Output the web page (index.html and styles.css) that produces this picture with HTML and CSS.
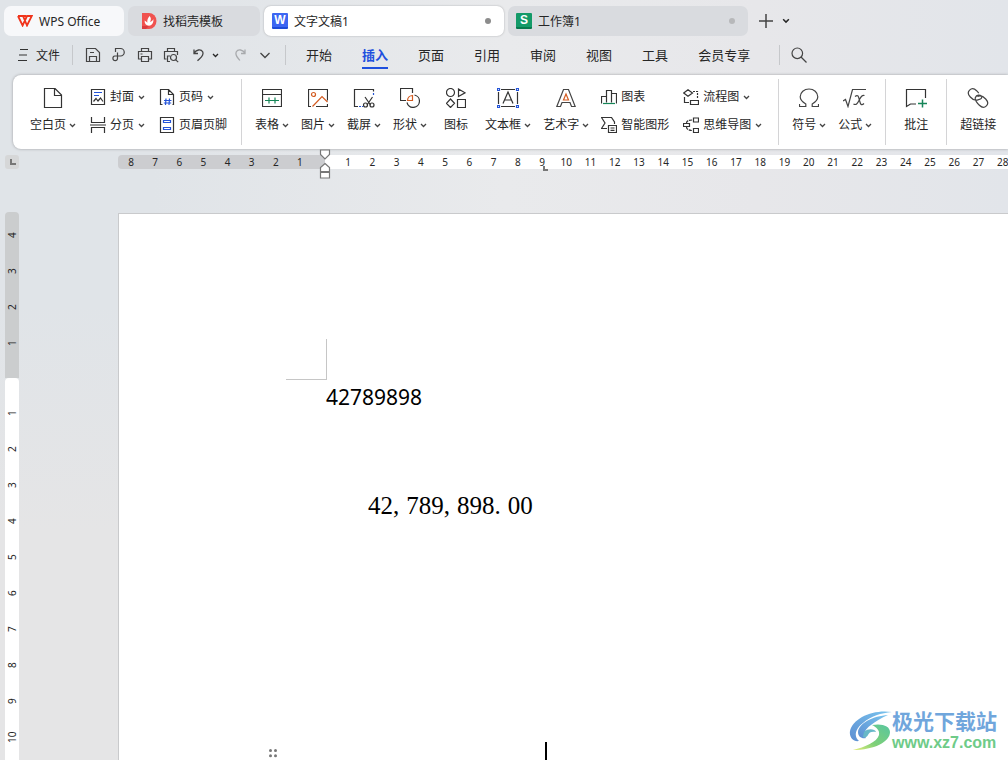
FILE: index.html
```html
<!DOCTYPE html>
<html lang="zh-CN">
<head>
<meta charset="utf-8">
<title>文字文稿1 - WPS Office</title>
<link rel="stylesheet" href="styles.css">
</head>
<body>
<svg class="defs" aria-hidden="true">
  <symbol id="chev" viewBox="0 0 7 5"><path d="M1 1l2.5 2.5L6 1" fill="none" stroke="currentColor" stroke-width="1.3"/></symbol>
</svg>
<div class="app">
  <header class="tabs">
    <button class="tab tab-home"><svg width="16" height="12" viewBox="0 0 16 12" fill="none" stroke="#f0341c" stroke-width="1.8"><path d="M1 1h5l4 9.5L14.8 1H10L5.6 10.5 1 1M6 1h3"/></svg><span>WPS Office</span></button>
    <button class="tab tab-docer"><svg width="16" height="16" viewBox="0 0 16 16"><path fill="#f0524f" d="M1 0h7a7.5 8 0 0 1 0 16H1z"/><path fill="#d93c40" d="M1 13h7l-3 3H1z"/><path fill="#fff" d="M8.6 3c1.7 2 1.6 4 .3 6C12 8 12 6.500 12.300 6c.6 4-1.500 6.500-4.300 6.700C5 12.500 3.400 10.500 3.600 7.500c1 .6 2 1.200 2.700 2.300C6 7 7 5 8.600 3z"/></svg><span>找稻壳模板</span></button>
    <button class="tab tab-doc active"><span class="app-icon writer">W</span><span class="name">文字文稿1</span><i class="dot"></i></button>
    <button class="tab tab-doc"><span class="app-icon sheet">S</span><span class="name">工作簿1</span><i class="dot"></i></button>
    <button class="plain new-tab" aria-label="新建"><svg width="14" height="14" viewBox="0 0 14 14" stroke="#444" stroke-width="1.500"><path d="M7 0v14M0 7h14"/></svg></button>
    <button class="plain" aria-label="标签列表"><svg width="8" height="6" viewBox="0 0 7 5"><use href="#chev"/></svg></button>
  </header>

  <nav class="menubar">
    <button class="plain file"><svg width="10" height="12" viewBox="0 0 10 12" stroke="#333"><path d="M2 .5h8M1 6h8M0 11.500h9"/></svg><span>文件</span></button>
    <i class="bar"></i>
    <div class="quick">
      <button class="plain" aria-label="保存"><svg width="16" height="16" viewBox="0 0 16 16" fill="none" stroke="#444" stroke-width="1.200"><path d="M1.500 1.500h9l4 4v9h-13zM4.500 14.500V9.500h7v5M5 5.500h4"/></svg></button>
      <button class="plain" aria-label="输出为PDF"><svg width="16" height="16" viewBox="0 0 16 16" fill="none" stroke="#444" stroke-width="1.200"><path d="M4.500 5V1.500h5a3.600 3.600 0 0 1 0 7.500H3.800a2.300 2.300 0 1 0 2.700 2.500V5.500"/></svg></button>
      <button class="plain" aria-label="打印"><svg width="16" height="16" viewBox="0 0 16 16" fill="none" stroke="#444" stroke-width="1.200"><path d="M4.500 4.500v-3h7v3M4 12H1.500V4.500h13V12H12M4.500 9.500h7v5h-7zM3.500 7h2"/></svg></button>
      <button class="plain" aria-label="打印预览"><svg width="16" height="16" viewBox="0 0 16 16" fill="none" stroke="#444" stroke-width="1.200"><path d="M4.500 4.500v-3h7v3M3.500 12h-2V4.500h13V8M7 9H4.500v5.500H7"/><circle cx="10.500" cy="10.500" r="3"/><path d="M12.800 12.800l2.400 2.400"/></svg></button>
      <button class="plain undo" aria-label="撤销"><svg width="14" height="14" viewBox="0 0 14 14" fill="none" stroke="#444" stroke-width="1.300"><path d="M2 1.500v4h4M2 5.200C4 1.500 9 .8 10.700 3.800c1.800 4-2.500 6.200-5.200 9"/></svg></button>
      <button class="plain undo-list" aria-label="撤销列表"><svg width="7" height="5"><use href="#chev"/></svg></button>
      <button class="plain redo" aria-label="恢复"><svg width="14" height="14" viewBox="0 0 14 14" fill="none" stroke="#a8aaad" stroke-width="1.300"><path d="M12 1.500v4H8M12 5.200C10 1.500 5 .8 3.300 3.800c-1.800 4 2 6.200 3.500 8.700"/></svg></button>
      <button class="plain more" aria-label="更多"><svg width="12" height="7" viewBox="0 0 12 7" fill="none" stroke="#444" stroke-width="1.300"><path d="M1.500 1L6 5.500 10.500 1"/></svg></button>
    </div>
    <i class="bar"></i>
    <div class="menus">
      <button class="plain">开始</button>
      <button class="plain current">插入</button>
      <button class="plain">页面</button>
      <button class="plain">引用</button>
      <button class="plain">审阅</button>
      <button class="plain">视图</button>
      <button class="plain">工具</button>
      <button class="plain">会员专享</button>
    </div>
    <i class="bar"></i>
    <button class="plain search" aria-label="搜索"><svg width="16" height="16" viewBox="0 0 16 16" fill="none" stroke="#444" stroke-width="1.200"><circle cx="6.300" cy="6.300" r="5.300"/><path d="M10 10l5.500 5.500"/></svg></button>
  </nav>

  <section class="ribbon">
    <div class="group first">
      <button class="big"><svg width="20" height="20" viewBox="0 0 20 20" fill="none" stroke="#333" stroke-width="1.200"><path d="M1.500.5H12l6.500 6.500v12.500h-17zM11.500.5V7.500h7"/></svg><span>空白页<svg class="chev"><use href="#chev"/></svg></span></button>
      <div class="stack">
        <button class="small"><svg width="16" height="16" viewBox="0 0 16 16" fill="none" stroke="#333" stroke-width="1.200"><path d="M1.500.5h13v15h-13z"/><path stroke="#2454d8" d="M4 3.500h8M4 6.500h5"/><path d="M3.500 12.500l2.500-3 2 2.500 2.500-3 2.500 3.500"/></svg><span>封面</span><svg class="chev"><use href="#chev"/></svg></button>
        <button class="small"><svg width="16" height="16" viewBox="0 0 16 16" fill="none" stroke="#333" stroke-width="1.200"><path d="M1.500 0v5.500h13V0M0 8h16M1.500 16v-5.500h13V16"/></svg><span>分页</span><svg class="chev"><use href="#chev"/></svg></button>
      </div>
      <div class="stack">
        <button class="small"><svg width="16" height="16" viewBox="0 0 16 16" fill="none" stroke="#333" stroke-width="1.200"><path d="M3.500 15.500h-2V.5h8l5 5v10h-1M9.500.5v5h5"/><path stroke="#2454d8" d="M7 9.500L6.500 16M10.500 9.500L10 16M5 11.500h7.500M4.800 14h7.400"/></svg><span>页码</span><svg class="chev"><use href="#chev"/></svg></button>
        <button class="small"><svg width="16" height="16" viewBox="0 0 16 16" fill="none" stroke="#333" stroke-width="1.200"><path d="M1.500.5h13v15h-13z"/><path stroke="#2454d8" d="M4.500 3.500h7v2h-7zM4.500 10.500h7v2h-7z"/></svg><span>页眉页脚</span></button>
      </div>
    </div>

    <div class="group objects">
      <button class="big"><svg width="20" height="20" viewBox="0 0 20 20" fill="none" stroke="#333" stroke-width="1.200"><path d="M.5 1.500h19v17H.5zM.5 6.500h19"/><path stroke="#168558" d="M3 12.500h14M7 9.500v6M13 9.500v6"/></svg><span>表格<svg class="chev"><use href="#chev"/></svg></span></button>
      <button class="big"><svg width="20" height="20" viewBox="0 0 20 20" fill="none" stroke="#333" stroke-width="1.200"><path d="M3 18.500H.5v-17h19v11M19.500 16v2.500H8"/><g stroke="#d35b20"><circle cx="5.500" cy="6.500" r="2"/><path d="M4.500 18.500l9.500-10 5.500 5.500"/></g></svg><span>图片<svg class="chev"><use href="#chev"/></svg></span></button>
      <button class="big"><svg width="22" height="20" viewBox="0 0 22 20" fill="none" stroke="#333" stroke-width="1.200"><path d="M5 18.500H1.500v-17h19v2"/><path stroke="#2454d8" stroke-dasharray="2 1" d="M20.500 5v3M6 18.500h4"/><path d="M12 9l5.500 8M19.500 9L14 17"/><circle cx="12.500" cy="17" r="2"/><circle cx="19" cy="17" r="2"/></svg><span>截屏<svg class="chev"><use href="#chev"/></svg></span></button>
      <button class="big"><svg width="20" height="20" viewBox="0 0 20 20" fill="none" stroke="#333" stroke-width="1.200"><path d="M6 12.500H.5V.5h12V5M14.500 7A6.300 6.300 0 1 1 7 14.500"/><path stroke="#d35b20" d="M12.500 7.500v5h-5a5.300 5.300 0 0 1 5-5z"/></svg><span>形状<svg class="chev"><use href="#chev"/></svg></span></button>
      <button class="big mid"><svg width="20" height="20" viewBox="0 0 20 20" fill="none" stroke="#333" stroke-width="1.200"><circle cx="4.500" cy="4.500" r="4"/><path d="M12.500 1v7.500L19 4.800zM4.500 11l4 4.300-4 4.200-4-4.200zM11.500 11.500h8v8h-8z"/></svg><span>图标</span></button>
      <button class="big"><svg width="22" height="20" viewBox="0 0 22 20" fill="none" stroke="#333" stroke-width="1.200"><path d="M4 1.500h14M4 18.500h14M1.500 4v12M20.500 4v12M6 15.500l5-11.500 5 11.500M7.500 12h7"/><path stroke="#2454d8" d="M.5.5h2v2h-2zM19.500.5h2v2h-2zM.5 17.500h2v2h-2zM19.500 17.500h2v2h-2z"/></svg><span>文本框<svg class="chev"><use href="#chev"/></svg></span></button>
      <button class="big"><svg width="20" height="20" viewBox="0 0 20 20" fill="none" stroke="#444" stroke-width="1.200"><path d="M.8 18.500L7.500 1.500h5l6.700 17h-3.700l-1.500-4H6l-1.500 4z"/><path stroke="#d35b20" d="M10 6l-2.500 6h5z"/></svg><span>艺术字<svg class="chev"><use href="#chev"/></svg></span></button>
      <div class="stacks">
        <div class="stack">
          <button class="small"><svg width="16" height="16" viewBox="0 0 16 16" fill="none" stroke="#333" stroke-width="1.200"><path d="M.5 14.500v-7h5v6M5.500 7.500v-6h5v12M10.500 4.500h5v10"/><path stroke="#168558" d="M2 14.500h12"/></svg><span>图表</span></button>
          <button class="small"><svg width="16" height="16" viewBox="0 0 16 16" fill="none" stroke="#333" stroke-width="1.200"><path d="M6 11.500H.5L4 6 .5.500h10L13.500 5v2M7.500 8.500h8v7h-8zM9.500 11h4M9.500 13.300h4"/></svg><span>智能图形</span></button>
        </div>
        <div class="stack">
          <button class="small"><svg width="16" height="16" viewBox="0 0 16 16" fill="none" stroke="#333" stroke-width="1.200"><path d="M5 .8L9.500 4 5 7.200.7 4zM1.500 8v5.500H6M7.500 11.500h8v4h-8z"/><path stroke-dasharray="2 1" d="M10 2.500h4.500V10"/></svg><span>流程图</span><svg class="chev"><use href="#chev"/></svg></button>
          <button class="small"><svg width="16" height="16" viewBox="0 0 16 16" fill="none" stroke="#333" stroke-width="1.200"><path d="M.5 6.500h6v3h-6zM10.500 1h5v4h-5zM10.500 11.500h5v4h-5z"/><path stroke-dasharray="3 1" d="M3.500 6c0-2 2-3 6-3M3.500 10c0 2 2 3.500 6 3.500"/></svg><span>思维导图</span><svg class="chev"><use href="#chev"/></svg></button>
        </div>
      </div>
    </div>

    <div class="group">
      <button class="big"><svg width="20" height="20" viewBox="0 0 20 20" fill="none" stroke="#444" stroke-width="1.200"><path d="M.5 16v2.500h6.300V16C3 13.800 1.200 11.800 1.200 8.800a8.800 7.800 0 0 1 17.600 0c0 3-1.800 5-5.600 7.200v2.500h6.300V16"/></svg><span>符号<svg class="chev"><use href="#chev"/></svg></span></button>
      <button class="big"><svg width="24" height="20" viewBox="0 0 24 20" fill="none" stroke="#444" stroke-width="1.200"><path d="M0 13l2.500-1.500 2.500 7L9.500 1.500H23M12 8.500c3-2.500 3.500 0 4.500 4s2 5.500 4.500 3M21.500 7.500c-3-1-4 2-5.500 5s-3 5-5.500 3.500"/></svg><span>公式<svg class="chev"><use href="#chev"/></svg></span></button>
    </div>
    <div class="group note">
      <button class="big"><svg width="22" height="20" viewBox="0 0 22 20" fill="none" stroke="#333" stroke-width="1.200"><path d="M20.500 10V1.500h-19v17l4-2.500H11"/><path stroke="#168558" stroke-width="1.500" d="M17.500 11.500v8M13 15.500h9"/></svg><span>批注</span></button>
    </div>
    <div class="group">
      <button class="big"><svg width="22" height="20" viewBox="0 0 22 20" fill="none" stroke="#444" stroke-width="1.200"><path d="M11.500 11.600C8.500 13 5.500 11.500 3.300 9 1 6.500.6 4 2.600 2.100 4.600.2 7.300.5 9.600 2.700l2.200 2.400M10.500 8.400c3-1.400 6 .1 8.200 2.600 2.300 2.500 2.700 5 .7 6.900-2 1.900-4.700 1.600-7-.6-2.800-2.700-4.900-5.300-4-7.800.5-1.400 1.500-2.200 3-2.400 2-.2 3.500.7 3.300 2.400-.2 1.200-1.200 1.800-3.200 2.100"/></svg><span>超链接</span></button>
    </div>
  </section>

  <div class="ruler-row">
    <div class="corner"><svg width="14" height="14" viewBox="0 0 14 14" fill="none" stroke="#777" stroke-width="2"><path d="M6 4v5h5"/></svg></div>
    <div class="ruler">
      <div class="outside"><b>8</b><b>7</b><b>6</b><b>5</b><b>4</b><b>3</b><b>2</b><b>1</b>
        <svg class="indent" width="12" height="30" viewBox="0 0 12 30" fill="#fff" stroke="#777" stroke-width="1.200"><path d="M1.500 1h9v4.500L6 10 1.500 5.500zM6 14.500l4.500 4v4h-9v-4zM1.500 23.500h9V29h-9z"/></svg>
      </div>
      <div class="inside"><b>1</b><b>2</b><b>3</b><b>4</b><b>5</b><b>6</b><b>7</b><b>8</b><b>9</b><b>10</b><b>11</b><b>12</b><b>13</b><b>14</b><b>15</b><b>16</b><b>17</b><b>18</b><b>19</b><b>20</b><b>21</b><b>22</b><b>23</b><b>24</b><b>25</b><b>26</b><b>27</b><b>28</b><i class="tabstop"></i></div>
    </div>
  </div>

  <main class="workspace">
    <div class="vruler">
      <div class="above"><b>4</b><b>3</b><b>2</b><b>1</b></div>
      <div class="below"><b>1</b><b>2</b><b>3</b><b>4</b><b>5</b><b>6</b><b>7</b><b>8</b><b>9</b><b>10</b></div>
    </div>
    <article class="page">
      <div class="margin-mark"></div>
      <p class="plain-number">42789898</p>
      <p class="money">42<span>,</span>789<span>,</span>898<span>.</span>00</p>
      <div class="last-line">
        <svg width="10" height="14" viewBox="0 0 10 14" fill="#777"><circle cx="2.500" cy="4.500" r="1.500"/><circle cx="7.500" cy="4.500" r="1.500"/><circle cx="2.500" cy="9.700" r="1.500"/><circle cx="7.500" cy="9.700" r="1.500"/></svg>
        <i class="caret"></i>
      </div>
    </article>
  </main>

  <div class="watermark">
    <svg width="43" height="42" viewBox="0 0 43 42">
      <defs>
        <linearGradient id="wb" x1="0" y1="1" x2="1" y2="0"><stop offset="0" stop-color="#5d8fd2"/><stop offset="1" stop-color="#79c4ee"/></linearGradient>
        <linearGradient id="wg" x1="1" y1="0" x2="0" y2="1"><stop offset="0" stop-color="#58c6a0"/><stop offset=".6" stop-color="#7ed077"/><stop offset="1" stop-color="#e8ee7a"/></linearGradient>
      </defs>
      <path fill="url(#wb)" d="M43 2C24-1 4 8 1 21c-1 6 3 11 9 10-6-5-3-13 4-18C22 6 32 3 43 2z"/>
      <path fill="url(#wb)" d="M39 5C24 6 10 13 9 22c0 5 4 7 8 6-3-4-1-9 5-13 5-4 10-7 17-10z"/>
      <path fill="url(#wg)" d="M23 15c10-2 18 1 18 7 0 10-16 18-37 18 12-3 24-8 26-15 1-5-3-8-7-10z"/>
      <path fill="#68b8c8" d="M15 22c4-4 11-3 12 0-4-1-7 0-8 3-1 2-3 3-5 2z"/>
    </svg>
    <div class="wm-text"><strong>极光下载站</strong><span>www.xz7.com</span></div>
  </div>
</div>
</body>
</html>
```
FILE: styles.css
```css
* { box-sizing: border-box; }
body {
  margin: 0;
  font-family: "Noto Sans", "Noto Sans CJK SC", sans-serif;
  font-size: 12px;
  color: #262626;
}
svg { display: block; flex: none; }
button {
  margin: 0;
  padding: 0;
  border: 0;
  background: none;
  font: inherit;
  color: inherit;
  white-space: nowrap;
}
b { font-weight: 400; }
.defs { position: absolute; width: 0; height: 0; }
.app {
  position: relative;
  display: flex;
  flex-direction: column;
  height: 100vh;
  overflow: hidden;
  background:
    linear-gradient(180deg, transparent 40%, #e5e5e6 70%),
    linear-gradient(90deg, #e0e4e8 0, #e0e4e8 15%, #e9eaec 50%, #e7e7ea 75%, #e2e5ea 100%);
}

/* window tabs */
.tabs { display: flex; align-items: center; gap: 4px; padding: 6px 4px 0; }
.tab {
  display: flex;
  align-items: center;
  gap: 6px;
  height: 30px;
  border-radius: 7px;
  background: #d9dbdf;
}
.tab-home { width: 120px; padding-left: 13px; background: #f7f8fa; }
.tab-docer { width: 132px; padding-left: 13px; }
.tab-doc { width: 240px; padding: 0 13px 0 8px; }
.tab.active { background: #fff; box-shadow: 0 0 2px #a5a7aa; }
.app-icon {
  width: 16px;
  height: 16px;
  border-radius: 1px;
  font: bold 12px/15px "Liberation Sans", sans-serif;
  text-align: center;
  color: #fff;
}
.writer { background: #3c66f2; border-bottom: 2px solid #1d4bd8; }
.sheet { background: #139a68; border-bottom: 2px solid #067a4d; }
.name { flex: 1; text-align: left; }
.dot { width: 6px; height: 6px; border-radius: 50%; background: #b7b8ba; }
.active .dot { background: #8c8c8c; }
.new-tab { margin: 0 5px 0 7px; }

/* menu row */
.menubar { display: flex; align-items: center; height: 39px; padding: 0 0 1px 18px; font-size: 13px; }
.file { display: flex; align-items: center; gap: 8px; font-size: 12px; margin-right: 12px; }
.bar { width: 1px; height: 20px; background: #c6c8cb; }
.quick { display: flex; align-items: center; gap: 10px; margin: 0 14px 0 12px; }
.quick .undo { margin-left: 3px; }
.quick .undo-list { margin-left: -4px; }
.quick .redo { margin-left: 4px; }
.quick .more { margin-left: 2px; }
.menus { display: flex; align-items: center; gap: 30px; padding: 0 29px 0 20px; }
.menus button { line-height: 20px; padding: 4px 0 2px; border-bottom: 2px solid transparent; }
.menus .current { color: #1f50de; border-color: #1f50de; font-weight: 600; }
.search { margin-left: 11px; }

/* ribbon */
.ribbon {
  display: flex;
  align-items: center;
  height: 74px;
  margin-left: 13px;
  border-radius: 8px 0 0 8px;
  background: #fff;
  box-shadow: 0 0 3px #9b9da0;
}
.group { display: flex; align-items: center; gap: 12px; height: 66px; padding: 0 13px 2px; }
.group + .group { border-left: 1px solid #d4d4d6; }
.group.first { gap: 14px; padding: 0 14px 2px 17px; }
.group.objects { padding-right: 16px; }
.group.note { padding: 0 18px 2px; }
.big { display: flex; flex-direction: column; align-items: center; gap: 8px; }
.big.mid { width: 34px; }
.big span { display: flex; align-items: center; gap: 3px; line-height: 18px; }
.stacks { display: flex; gap: 14px; }
.stack { display: flex; flex-direction: column; gap: 10px; }
.small { display: flex; align-items: center; gap: 4px; line-height: 18px; }
.chev { width: 7px; height: 5px; color: #444; }

/* rulers */
.ruler-row { display: flex; padding: 6px 0 0 5px; height: 63px; flex: none; font-size: 10px; }
.corner { width: 14px; height: 14px; border-radius: 3px; background: #d6d7d8; }
.ruler { display: flex; flex: 1; height: 14px; margin-left: 99px; }
.ruler b { display: flex; justify-content: center; width: 10px; line-height: 14px; }
.outside {
  position: relative;
  display: flex;
  justify-content: space-between;
  width: 207px;
  padding: 0 20px 0 8px;
  border-radius: 4px 0 0 4px;
  background: #cccdd0;
}
.inside {
  position: relative;
  display: flex;
  flex: 1;
  justify-content: space-between;
  padding-left: 18px;
  background: #fff;
}
.indent { position: absolute; right: -6px; top: -6px; z-index: 1; }
.tabstop {
  position: absolute;
  left: 218px;
  top: 11px;
  width: 5px;
  height: 5px;
  border: solid #777;
  border-width: 0 0 2px 2px;
}

/* document area */
.workspace { display: flex; flex: 1; min-height: 0; padding-left: 5px; }
.vruler { width: 14px; margin-right: 99px; font-size: 10px; }
.vruler b {
  display: flex;
  align-items: center;
  justify-content: center;
  width: 14px;
  height: 36px;
  writing-mode: vertical-rl;
  transform: rotate(180deg);
}
.above { padding: 5px 0 17px; border-radius: 4px 4px 0 0; background: #cbcdce; }
.below { padding: 17px 0 12px; border-radius: 4px 4px 0 0; background: #fff; }
.page {
  display: flex;
  flex-direction: column;
  flex: 1;
  margin-top: 1px;
  padding-top: 125px;
  border: solid #c9cacc;
  border-width: 1px 0 0 1px;
  background: #fff;
  color: #000;
}
.page p { margin: 0; }
.margin-mark {
  width: 41px;
  height: 41px;
  margin-left: 167px;
  border: solid #c6c6c6;
  border-width: 0 1px 1px 0;
}
.page .plain-number { margin-left: 207px; font-size: 21px; line-height: 34px; }
.page .money {
  margin: 75px 0 0 249px;
  font: 25px/34px "Liberation Serif", serif;
}
.money span { margin-right: 7px; }
.last-line { display: flex; align-items: center; height: 18px; margin-top: auto; padding-left: 149px; }
.last-line svg { align-self: flex-end; }
.caret { width: 2px; height: 18px; margin-left: 267px; background: #000; }

/* site mark */
.watermark { position: absolute; right: 11px; bottom: 7px; display: flex; align-items: center; }
.wm-text { display: flex; flex-direction: column; color: #70a6dc; }
.wm-text strong { font-size: 21px; line-height: 24px; }
.wm-text span { color: #6ecb88; font: bold 16px/20px "Liberation Sans", sans-serif; }
```
